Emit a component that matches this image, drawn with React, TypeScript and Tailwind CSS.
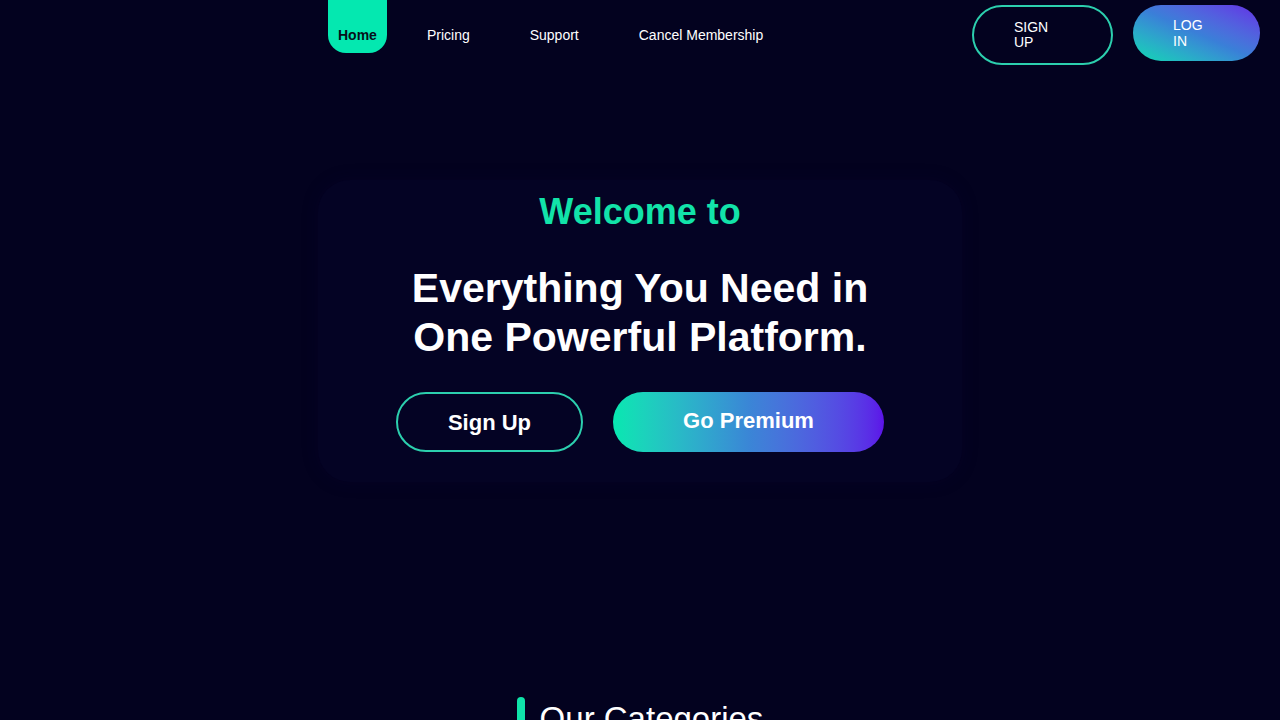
import React from "react";

export default function App() {
  return (
    <div
      className="min-h-screen w-full bg-[#03021f] text-white overflow-hidden"
      style={{ fontFamily: '"Liberation Sans", Arial, sans-serif' }}
    >
      {/* NAV */}
      <nav className="flex items-start h-[70px] pr-5">
        <div className="flex items-start ml-[328px] text-[14px]">
          <a className="flex items-end h-[53px] px-[10px] pb-[8px] rounded-b-[18px] bg-[#04e8b0] text-[#06101a] font-bold leading-5">
            Home
          </a>
          <a className="ml-[40px] h-[53px] flex items-end pb-[8px] leading-5 text-white">Pricing</a>
          <a className="ml-[60px] h-[53px] flex items-end pb-[8px] leading-5 text-white">Support</a>
          <a className="ml-[60px] h-[53px] flex items-end pb-[8px] leading-5 text-white">Cancel Membership</a>
        </div>
        <div className="ml-auto flex items-start gap-5 mt-[5px] text-[14px]">
          <button className="w-[141px] h-[60px] rounded-full border-2 border-[#2ccfae] pl-10 flex items-center">
            <span className="block w-[40px] text-left leading-[15px]">SIGN UP</span>
          </button>
          <button className="w-[127px] h-[56px] rounded-full pl-10 flex items-center bg-gradient-to-tr from-[#0ad9b0] via-[#3a7fd8] to-[#6328e6]">
            <span className="block w-[40px] text-left leading-[16px] -mt-[1px]">LOG IN</span>
          </button>
        </div>
      </nav>

      {/* HERO */}
      <section className="flex justify-center mt-[110px]">
        <div className="w-[644px] h-[302px] rounded-[32px] bg-[#040324] shadow-[0_0_16px_rgba(10,8,50,0.25)] flex flex-col items-center pt-[12px]">
          <h2 className="text-[36px] leading-[40px] font-bold text-[#12e3a9]">Welcome to</h2>
          <h1 className="mt-[32px] text-[41px] leading-[49px] font-bold text-center text-white">
            Everything You Need in
            <br />
            One Powerful Platform.
          </h1>
          <div className="mt-[30px] flex gap-[30px]">
            <button className="w-[187px] h-[60px] rounded-full border-2 border-[#2ccfae] text-[22px] font-bold flex items-center justify-center pt-[1px]">
              Sign Up
            </button>
            <button className="w-[271px] h-[60px] rounded-full bg-gradient-to-r from-[#06e8b0] via-[#3a86d6] to-[#5c12e8] text-[22px] font-bold flex items-center justify-center pb-[3px]">
              Go Premium
            </button>
          </div>
        </div>
      </section>

      {/* CATEGORIES */}
      <section className="flex justify-center mt-[215px]">
        <div className="flex items-start gap-[15px]">
          <div className="w-[8px] h-[44px] rounded-full bg-[#0fe3a9]" />
          <h3 className="text-[33px] leading-[40px] font-normal text-white mt-[2px]">Our Categories</h3>
        </div>
      </section>
    </div>
  );
}
